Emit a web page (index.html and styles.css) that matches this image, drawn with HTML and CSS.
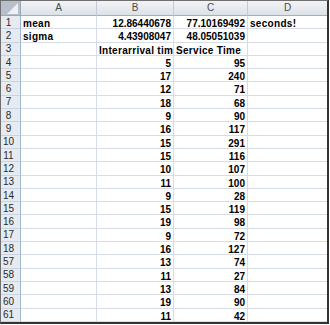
FILE: index.html
```html
<!DOCTYPE html>
<html>
<head>
<meta charset="utf-8">
<link rel="stylesheet" href="styles.css">
</head>
<body>
<div class="sheet">
  <div class="corner"><svg class="tri" width="11" height="11" viewBox="0 0 11 11"><polygon points="11,0 11,11 0,11" fill="#eef0f3"/></svg></div>
  <div class="ch">A</div><div class="ch">B</div><div class="ch">C</div><div class="ch last">D</div>

  <div class="rh">1</div><div class="c txt">mean</div><div class="c num">12.86440678</div><div class="c num">77.10169492</div><div class="c txt last">seconds!</div>
  <div class="rh">2</div><div class="c txt">sigma</div><div class="c num">4.43908047</div><div class="c num">48.05051039</div><div class="c last"></div>
  <div class="rh">3</div><div class="c"></div><div class="c txt">Interarrival time</div><div class="c txt">Service Time</div><div class="c last"></div>
  <div class="rh">4</div><div class="c"></div><div class="c num">5</div><div class="c num">95</div><div class="c last"></div>
  <div class="rh">5</div><div class="c"></div><div class="c num">17</div><div class="c num">240</div><div class="c last"></div>
  <div class="rh">6</div><div class="c"></div><div class="c num">12</div><div class="c num">71</div><div class="c last"></div>
  <div class="rh">7</div><div class="c"></div><div class="c num">18</div><div class="c num">68</div><div class="c last"></div>
  <div class="rh">8</div><div class="c"></div><div class="c num">9</div><div class="c num">90</div><div class="c last"></div>
  <div class="rh">9</div><div class="c"></div><div class="c num">16</div><div class="c num">117</div><div class="c last"></div>
  <div class="rh">10</div><div class="c"></div><div class="c num">15</div><div class="c num">291</div><div class="c last"></div>
  <div class="rh">11</div><div class="c"></div><div class="c num">15</div><div class="c num">116</div><div class="c last"></div>
  <div class="rh">12</div><div class="c"></div><div class="c num">10</div><div class="c num">107</div><div class="c last"></div>
  <div class="rh">13</div><div class="c"></div><div class="c num">11</div><div class="c num">100</div><div class="c last"></div>
  <div class="rh">14</div><div class="c"></div><div class="c num">9</div><div class="c num">28</div><div class="c last"></div>
  <div class="rh">15</div><div class="c"></div><div class="c num">15</div><div class="c num">119</div><div class="c last"></div>
  <div class="rh">16</div><div class="c"></div><div class="c num">19</div><div class="c num">98</div><div class="c last"></div>
  <div class="rh">17</div><div class="c"></div><div class="c num">9</div><div class="c num">72</div><div class="c last"></div>
  <div class="rh">18</div><div class="c"></div><div class="c num">16</div><div class="c num">127</div><div class="c last"></div>
  <div class="rh">57</div><div class="c"></div><div class="c num">13</div><div class="c num">74</div><div class="c last"></div>
  <div class="rh">58</div><div class="c"></div><div class="c num">11</div><div class="c num">27</div><div class="c last"></div>
  <div class="rh">59</div><div class="c"></div><div class="c num">13</div><div class="c num">84</div><div class="c last"></div>
  <div class="rh">60</div><div class="c"></div><div class="c num">19</div><div class="c num">90</div><div class="c last"></div>
  <div class="rh">61</div><div class="c"></div><div class="c num">11</div><div class="c num">42</div><div class="c last"></div>
</div>
</body>
</html>
```
FILE: styles.css
```css
html, body {
  margin: 0;
  padding: 0;
  background: #ffffff;
}

.sheet {
  display: grid;
  grid-template-columns: 20px 76px 77px 74px 79px;
  grid-template-rows: 15px repeat(23, 13.3px);
  width: max-content;
  border-top: 1px solid #6f6f6f;
  border-left: 1px solid #6f6f6f;
  border-right: 2px solid #333333;
  border-bottom: 2px solid #333333;
  font-family: "Liberation Sans", Arial, sans-serif;
  font-size: 10px;
  background: #ffffff;
}

.sheet > div {
  box-sizing: border-box;
  overflow: hidden;
  white-space: nowrap;
}

.corner {
  position: relative;
  background: #b7bfca;
  border-right: 1px solid #9aa6b5;
  border-bottom: 1px solid #9aa6b5;
}

.tri {
  position: absolute;
  right: 2px;
  bottom: 1px;
}

.ch {
  display: flex;
  align-items: center;
  justify-content: center;
  background: linear-gradient(#f1f3f6, #dde2e8);
  border-right: 1px solid #c3cbd6;
  border-bottom: 1px solid #9eb0c4;
  color: #4a4a4a;
  font-weight: normal;
  line-height: 12px;
}

.ch.last {
  border-right: none;
}

.rh {
  display: flex;
  align-items: center;
  justify-content: center;
  padding-right: 4px;
  padding-top: 1px;
  background: #e6ebf2;
  border-right: 1px solid #9eb6ce;
  border-bottom: 1px solid #c9d3df;
  color: #2a2a2a;
  line-height: 12px;
}

.c {
  border-right: 1px solid #d6dde8;
  border-bottom: 1px solid #d6dde8;
  font-weight: bold;
  color: #000000;
  line-height: 13px;
  padding: 1px 2px 0 2px;
}

.c.last {
  border-right: none;
}

.num {
  text-align: right;
}

.txt {
  text-align: left;
  letter-spacing: 0.3px;
}
```
